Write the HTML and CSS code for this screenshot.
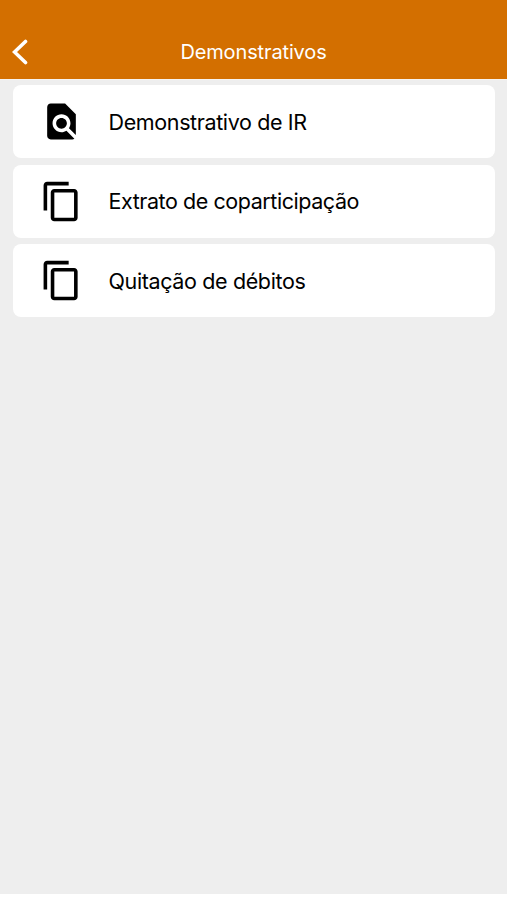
FILE: index.html
```html
<!DOCTYPE html>
<html lang="pt-BR">
<head>
<meta charset="utf-8">
<title>Demonstrativos</title>
<link rel="stylesheet" href="styles.css">
</head>
<body>
<header class="bar">
  <svg class="back" viewBox="0 0 16 26"><path d="M13.500 2.500 2.500 13 13.500 23.500"/></svg>
  <h1 class="title">Demonstrativos</h1>
</header>
<main class="list">
  <a class="card">
    <svg class="icon" viewBox="0 0 24 24"><path d="M20 19.59V8l-6-6H6c-1.100 0-1.990.9-1.990 2L4 20c0 1.100.89 2 1.990 2H18c.45 0 .85-.15 1.190-.4l-4.430-4.430c-.8.520-1.740.83-2.760.83-2.760 0-5-2.240-5-5s2.240-5 5-5 5 2.240 5 5c0 1.020-.31 1.960-.83 2.750L20 19.590zM9 13c0 1.660 1.340 3 3 3s3-1.340 3-3-1.340-3-3-3-3 1.340-3 3z"/></svg>
    <span class="label">Demonstrativo de IR</span>
  </a>
  <a class="card">
    <svg class="icon" viewBox="0 0 24 24"><path d="M16 1H4c-1.100 0-2 .9-2 2v14h2V3h12V1zm3 4H8c-1.100 0-2 .9-2 2v14c0 1.100.9 2 2 2h11c1.100 0 2-.9 2-2V7c0-1.100-.9-2-2-2zm0 16H8V7h11v14z"/></svg>
    <span class="label label-long">Extrato de coparticipação</span>
  </a>
  <a class="card">
    <svg class="icon" viewBox="0 0 24 24"><path d="M16 1H4c-1.100 0-2 .9-2 2v14h2V3h12V1zm3 4H8c-1.100 0-2 .9-2 2v14c0 1.100.9 2 2 2h11c1.100 0 2-.9 2-2V7c0-1.100-.9-2-2-2zm0 16H8V7h11v14z"/></svg>
    <span class="label">Quitação de débitos</span>
  </a>
</main>
<footer class="foot"></footer>
</body>
</html>
```
FILE: styles.css
```css
* { box-sizing: border-box; }
body { margin: 0; height: 900px; display: flex; flex-direction: column; background: #eee; font-family: Inter, sans-serif; }
.bar { height: 79px; padding: 25px 12px 0; background: #d36f00; display: grid; grid-template-columns: 16px 1fr 16px; align-items: center; }
.back { width: 16px; height: 26px; fill: none; stroke: #fff; stroke-width: 3.6; stroke-linecap: round; }
.title { margin: 0; color: #fff; font-size: 20px; font-weight: 400; line-height: 26px; text-align: center; letter-spacing: -0.13px; }
.list { flex: 1; padding: 5px 12px 0 13px; border-top: 1px solid #f6f3ef; display: flex; flex-direction: column; gap: 6.500px; }
.card { height: 73px; border-radius: 8px; background: #fff; display: flex; align-items: center; padding-left: 27px; }
.icon { width: 43px; height: 43px; margin-right: 25.500px; fill: #000; }
.label { font-size: 21.500px; color: #000; letter-spacing: -0.37px; white-space: nowrap; }
.label-long { letter-spacing: -0.44px; }
.foot { height: 6px; background: #fff; }
```
